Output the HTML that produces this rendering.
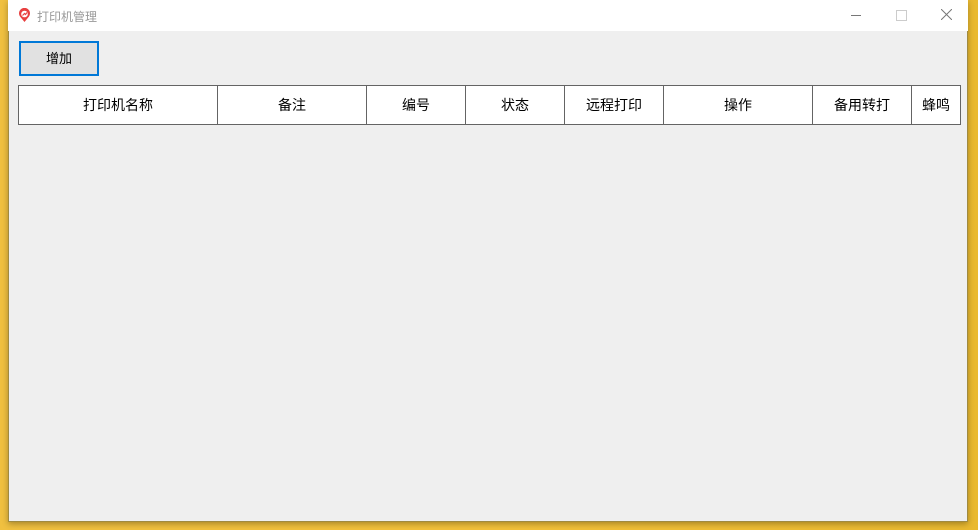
<!DOCTYPE html>
<html><head><meta charset="utf-8"><style>
body{margin:0;width:978px;height:530px;overflow:hidden;background:linear-gradient(90deg,#f0c040,#f3c13a 50%,#e9b930);font-family:"Liberation Sans","Noto Sans CJK SC",sans-serif;position:relative}
.win{position:absolute;left:8px;top:0;width:960px;height:522px;background:#efefef;border:1px solid #a08a40;border-top:none;box-sizing:border-box;box-shadow:0 2px 6px rgba(0,0,0,.3)}
.tb{position:absolute;left:-1px;top:0;width:960px;height:31px;background:#fff}
.title{position:absolute;left:29px;top:8px;font-size:12px;color:#999}
.btn{position:absolute;left:10px;top:41px;width:80px;height:35px;box-sizing:border-box;border:2px solid #0078d7;background:#e1e1e1;font-size:13px;text-align:center;line-height:31px;color:#000}
table{position:absolute;left:9px;top:85px;border-collapse:collapse;background:#fff}
td{border:1px solid #646464;height:38px;padding:0;text-align:center;font-size:14px;color:#000}
</style></head><body>
<div class="win">
<div class="tb">
<svg style="position:absolute;left:10px;top:8px" width="13" height="15" viewBox="0 0 13 15"><path d="M6.5 14 L2 8.5 A5.5 5.5 0 1 1 11 8.5 Z" fill="#e84040"/><circle cx="6.5" cy="6" r="3.3" fill="#fff"/><path d="M4.5 7.5 L6.5 5.5 L7.5 6.5 L9 4.5" stroke="#e84040" stroke-width="1.2" fill="none"/></svg>
<div class="title">打印机管理</div>
<div style="position:absolute;left:843px;top:15px;width:10px;height:1px;background:#777"></div>
<div style="position:absolute;left:888px;top:10px;width:9px;height:9px;border:1px solid #ccc"></div>
<svg style="position:absolute;left:933px;top:9px" width="11" height="11"><path d="M0 0L11 11M11 0L0 11" stroke="#777" stroke-width="1"/></svg>
</div>
<div class="btn">增加</div>
<table><tr>
<td style="width:198px">打印机名称</td><td style="width:148px">备注</td><td style="width:98px">编号</td><td style="width:98px">状态</td><td style="width:98px">远程打印</td><td style="width:148px">操作</td><td style="width:98px">备用转打</td><td style="width:48px">蜂鸣</td>
</tr></table>
</div>
</body></html>
